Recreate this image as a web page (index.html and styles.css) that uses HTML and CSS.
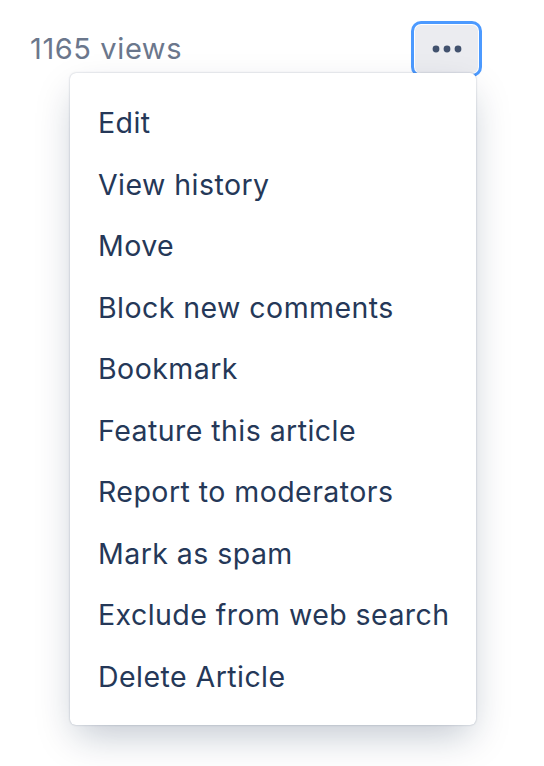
FILE: index.html
```html
<!DOCTYPE html>
<html>
<head>
<meta charset="utf-8">
<link rel="stylesheet" href="styles.css">
</head>
<body>
<div class="page">
  <div class="header">
    <span class="views">1165 views</span>
    <button class="more" aria-label="More actions">
      <svg width="30" height="8" viewBox="0 0 30 8"><circle cx="4" cy="4" r="3.4" fill="#42526e"/><circle cx="15" cy="4" r="3.4" fill="#42526e"/><circle cx="26" cy="4" r="3.4" fill="#42526e"/></svg>
    </button>
  </div>
  <ul class="menu">
    <li class="item">Edit</li>
    <li class="item">View history</li>
    <li class="item">Move</li>
    <li class="item">Block new comments</li>
    <li class="item">Bookmark</li>
    <li class="item">Feature this article</li>
    <li class="item">Report to moderators</li>
    <li class="item">Mark as spam</li>
    <li class="item">Exclude from web search</li>
    <li class="item">Delete Article</li>
  </ul>
</div>
</body>
</html>
```
FILE: styles.css
```css
* { box-sizing: border-box; }
html, body { margin: 0; padding: 0; background: #ffffff; }
body {
  font-family: Inter, "Noto Sans", "Liberation Sans", sans-serif;
  -webkit-font-smoothing: antialiased;
}
.page {
  position: relative;
  width: 544px;
  height: 766px;
}
.header {
  display: flex;
  align-items: center;
  justify-content: space-between;
  padding: 25px 66px 0 30px;
  width: 544px;
}
.views {
  font-size: 29px;
  letter-spacing: 0.6px;
  color: #6b778c;
  line-height: 48px;
}
.more {
  width: 63px;
  height: 48px;
  border: 0;
  border-radius: 6px;
  background: #ebecf0;
  box-shadow: 0 0 0 1px #ffffff, 0 0 0 4px #4c9aff;
  display: flex;
  align-items: center;
  justify-content: center;
  padding: 0;
}
.more svg { display: block; }
.menu {
  position: absolute;
  left: 70px;
  top: 73px;
  width: 406px;
  margin: 0;
  padding: 19px 0 18px;
  list-style: none;
  background: #ffffff;
  border-radius: 6px;
  box-shadow: 0 16px 36px -6px rgba(9, 30, 66, 0.25), 0 0 2px rgba(9, 30, 66, 0.3);
}
.item {
  height: 61.55px;
  line-height: 61.55px;
  padding: 0 28px;
  font-size: 28.5px;
  letter-spacing: 0.45px;
  color: #253858;
  white-space: nowrap;
}
```
